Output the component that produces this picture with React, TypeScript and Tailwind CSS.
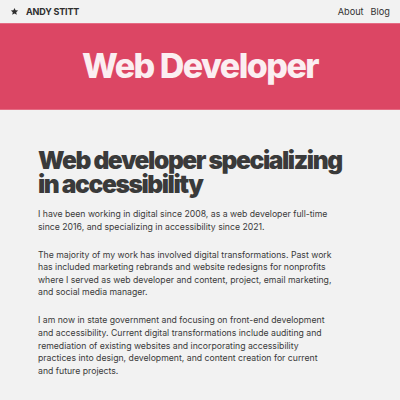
import * as React from 'react'

const StarIcon = () => (
    <svg viewBox="0 0 24 24" className="h-[9px] w-[9px]" fill="currentColor">
        <path d="M12 2.5l2.9 6.3 6.9.7-5.2 4.6 1.5 6.8L12 17.4l-6.1 3.5 1.5-6.8-5.2-4.6 6.9-.7z" />
    </svg>
)

const App = () => {
    return (
        <div className="min-h-[400px] bg-[#f2f2f2] font-['Inter',sans-serif] text-[#3b3b3b]">
            <header className="flex h-[23px] items-center justify-between pl-[10px] pr-[10px]">
                <a href="#" className="flex items-center gap-[7px] text-[9px] font-bold uppercase tracking-[-0.02em] text-[#2e2e2e]">
                    <StarIcon />
                    <span>Andy Stitt</span>
                </a>
                <nav className="flex gap-[7px] text-[9.2px] text-[#333]">
                    <a href="#">About</a>
                    <a href="#">Blog</a>
                </nav>
            </header>

            <section className="flex h-[87px] items-center justify-center border-y border-[#e56c84] bg-[#dc4664]">
                <h1 className="pb-[2px] text-[34px] font-extrabold tracking-[-0.045em] text-[#fbeef1]">
                    Web Developer
                </h1>
            </section>

            <main className="mx-auto w-[324px] pt-[38px] pb-[30px]">
                <h2 className="mb-[12px] w-[306px] text-[24.6px] font-black leading-[24px] tracking-[-0.058em] text-[#3a3a3a]">
                    Web developer specializing in accessibility
                </h2>
                <div className="w-[297px] text-[8.7px] leading-[12.6px] text-[#3a3a3a]">
                    <p className="mb-[15.4px]">
                        I have been working in digital since 2008, as a web
                        developer full-time since 2016, and specializing in
                        accessibility since 2021.
                    </p>
                    <p className="mb-[15.4px]">
                        The majority of my work has involved digital
                        transformations. Past work has included marketing
                        rebrands and website redesigns for nonprofits where I
                        served as web developer and content, project, email
                        marketing, and social media manager.
                    </p>
                    <p>
                        I am now in state government and focusing on front-end
                        development and accessibility. Current digital
                        transformations include auditing and remediation of
                        existing websites and incorporating accessibility
                        practices into design, development, and content
                        creation for current and future projects.
                    </p>
                </div>
            </main>
        </div>
    )
}

export default App
